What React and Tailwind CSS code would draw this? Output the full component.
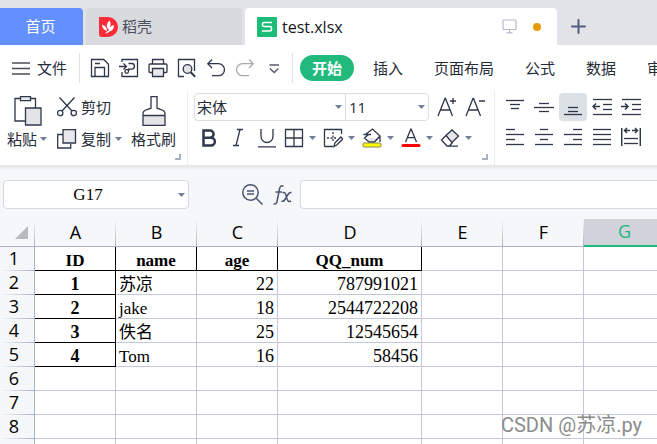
import React from 'react';
import clsx from 'clsx';

const Icon = ({ w = 20, h = 20, children }) => (
    <svg width={w} height={h} viewBox={`0 0 ${w} ${h}`} fill="none" stroke="#2f374b" strokeWidth="1.3" className="shrink-0" aria-hidden="true">
        {children}
    </svg>
);

const Caret = () => (
    <svg width="7" height="4" viewBox="0 0 7 4" className="shrink-0" aria-hidden="true">
        <path d="M0 0h7L3.5 4z" fill="#717d99" />
    </svg>
);

const Corner = () => (
    <svg width="6" height="6" viewBox="0 0 6 6" className="absolute bottom-[5px] right-[6px]" aria-hidden="true">
        <path d="M5 0v5H0" fill="none" stroke="#a7b0c2" strokeWidth="2" />
    </svg>
);

// Quick access bar
const quickActions = [
    {
        name: '保存',
        icon: (
            <Icon>
                <path d="M1.5 1.5h12.2l4.8 4.8v12.2h-17z" />
                <path d="M5 18V9.500h9.500V18M5 5.500h5" />
            </Icon>
        ),
    },
    {
        name: '输出为PDF',
        icon: (
            <Icon>
                <path d="M3 4V1.500h15.500v17H3V14M0 8.500h7M4.500 5.500l3 3-3 3" />
                <path d="M9.500 5.500h3.200a2.700 2.700 0 0 1 0 5.600H9.500v2.400a1.800 1.800 0 1 1-1.800-1.800H11" />
            </Icon>
        ),
    },
    {
        name: '打印',
        icon: (
            <Icon>
                <path d="M4.500 6V1.500h11V6M4.500 14.500h-2.500q-1 0-1-1v-6.500q0-1 1-1h16q1 0 1 1v6.500q0 1-1 1h-2.500" />
                <path d="M4.500 10.500h11v8h-11z" fill="#e9eaed" />
            </Icon>
        ),
    },
    {
        name: '打印预览',
        icon: (
            <Icon>
                <path d="M7 18.500H1.500v-17h16V13" />
                <circle cx="10.500" cy="11" r="4.300" fill="#e0e2e6" />
                <path d="M13.700 14.200l4.500 4.500" strokeWidth="2" />
            </Icon>
        ),
    },
    {
        name: '撤销',
        icon: (
            <Icon>
                <path d="M6 1.500L1.800 5.700 6 10M2 5.700h10.500a6 6 0 0 1 0 12H6" />
            </Icon>
        ),
    },
    {
        name: '恢复',
        icon: (
            <Icon>
                <path d="M14 1.500l4.200 4.200L14 10M18 5.700H7.500a6 6 0 0 0 0 12H14" stroke="#a6a8ae" />
            </Icon>
        ),
    },
    {
        name: '自定义快速访问工具栏',
        icon: (
            <Icon>
                <path d="M5.500 7h9.500M6 10.500l4.200 4 4.200-4" stroke="#555b69" />
            </Icon>
        ),
    },
];

const menus = ['插入', '页面布局', '公式', '数据', '审阅'];

const splitTools = [
    {
        name: '边框',
        icon: (
            <Icon>
                <path d="M1.500 1.500h17v17h-17zM10 1.500v17M1.500 10h17" />
            </Icon>
        ),
    },
    {
        name: '绘图边框',
        icon: (
            <Icon>
                <path d="M1.500 18.500v-17h17V6M1.500 18.500H10" />
                <path d="M4 10h9M10 4v10" strokeDasharray="2 1.500" />
                <path d="M11 18.500l.8-3.500 6-6 2 2-6 6z" fill="#fff" />
            </Icon>
        ),
    },
    {
        name: '填充颜色',
        icon: (
            <Icon>
                <path d="M5 10h13l-5 4H8z" fill="#e3e5e9" stroke="none" />
                <path d="M1.500 6.500H9M4 6l6.500-5 7.500 7-5.500 6H7L2.500 10l4-3.500M18 8v6" />
                <rect x="1" y="15" width="18" height="4" rx="1" fill="#ffff00" stroke="#858b57" strokeWidth="1" />
            </Icon>
        ),
    },
    {
        name: '字体颜色',
        icon: (
            <Icon>
                <path d="M4.500 14L9.800 1.200h.4L15.500 14M6.300 9.700h7.400" />
                <path d="M2 17.500h16" stroke="#ff0000" strokeWidth="3" strokeLinecap="round" />
            </Icon>
        ),
    },
    {
        name: '清除',
        icon: (
            <Icon>
                <path d="M6 7.500l6-5.500 6.500 6-6.500 6.500z" fill="#e5e7ea" />
                <path d="M6 7.500l-4.500 4.500 5.500 6h2.500l3-3.500M8 18.200h10" />
            </Icon>
        ),
    },
];

// Each entry is a list of [x1, x2, y] strokes, plus an optional arrow path
const alignTools = [
    { name: '顶端对齐', lines: [[1, 19, 3], [5, 15, 7], [6, 14, 11]] },
    { name: '垂直居中', lines: [[5, 15, 6], [0, 20, 10], [5, 15, 14]] },
    { name: '底端对齐', lines: [[5, 15, 10], [5, 15, 14], [1, 19, 17]], active: true },
    { name: '减少缩进量', lines: [[1, 20, 2], [11, 20, 7], [11, 20, 12], [1, 20, 17]], arrow: 'M8 9.500H0.500M4 6.500l-3 3 3 3' },
    { name: '增加缩进量', lines: [[1, 20, 2], [11, 20, 7], [11, 20, 12], [1, 20, 17]], arrow: 'M0 9.500h7M4 6.500l3 3-3 3' },
    { name: '左对齐', lines: [[1, 10, 2], [1, 19, 7], [1, 10, 12], [1, 19, 17]] },
    { name: '水平居中', lines: [[6, 14, 2], [1, 19, 7], [6, 14, 12], [1, 19, 17]] },
    { name: '右对齐', lines: [[10, 19, 2], [1, 19, 7], [10, 19, 12], [1, 19, 17]] },
    { name: '两端对齐', lines: [[1, 19, 2], [1, 19, 7], [1, 19, 12], [1, 19, 17]] },
    { name: '分散对齐', lines: [[3, 17, 11], [3, 17, 16]], arrow: 'M.700 1v18M19.300 1v18M9 3.500H3.500M6 1L3.500 3.500 6 6M11 3.500h5.500M14 1l2.500 2.500L14 6' },
];

const columns = ['A', 'B', 'C', 'D', 'E', 'F', 'G'];

const rows = [
    ['ID', 'name', 'age', 'QQ_num'],
    ['1', '苏凉', '22', '787991021'],
    ['2', 'jake', '18', '2544722208'],
    ['3', '佚名', '25', '12545654'],
    ['4', 'Tom', '16', '58456'],
    [],
    [],
    [],
];

const TabBar = () => (
    <div className="flex h-[45px] items-end bg-[#e2e3e7] text-[15px]">
        <button className="h-[37px] w-[83px] shrink-0 rounded-tr bg-[#648fff] pr-[2px] text-white">首页</button>
        <button className="ml-[3px] flex h-[37px] w-[156px] shrink-0 items-center gap-1 rounded-t bg-[#d9dadd] pl-[13px] text-[#4a4f5c]">
            <svg width="19" height="20" viewBox="0 0 19 20" aria-hidden="true">
                <path d="M0 0h9a10 10 0 0 1 0 20H3q-3 0-3-3z" fill="#fb2b37" />
                <path d="M9.500 12.500C6.500 9 8 6 10.500 3.500c1.800 3 1.500 6-1 9zM8 14C4.500 13 3 10.500 3 7.500 6.500 8.500 8 11 8 14zM9.500 14.500c0-3.500 2-5.500 5.500-6.500 0 4-2 6.500-5.500 6.500zM6 16.500l3-3 1.500 1.200q-2 1.800-4.500 1.800z" fill="#fff" />
            </svg>
            稻壳
        </button>
        <div className="ml-[3px] flex h-[37px] w-[312px] shrink-0 items-center rounded-t bg-white pl-3 pr-4 text-[#15171d]">
            <svg width="20" height="20" viewBox="0 0 20 20" className="mr-[5px]" aria-hidden="true">
                <rect width="20" height="20" rx="1" fill="#1abc78" />
                <path d="M15 5.500H7q-1.500 0-1.500 1.500v1q0 1.500 1.500 1.500h6q1.500 0 1.500 1.500v1.500q0 1.500-1.500 1.500H5" fill="none" stroke="#fff" strokeWidth="1.500" />
            </svg>
            <span className="font-['Open_Sans',sans-serif] text-[16px]">test.xlsx</span>
            <svg width="15" height="15" viewBox="0 0 15 15" className="ml-auto" fill="none" stroke="#b4bacb" strokeWidth="1.200" aria-hidden="true">
                <rect x="1" y="1" width="13" height="9.500" rx="1" />
                <path d="M7.500 10.500v3M4.500 13.800h6" />
            </svg>
            <span className="ml-4 h-2 w-2 rounded-full bg-[#e69a05]"></span>
        </div>
        <button aria-label="新建" className="flex h-[37px] w-[43px] items-center justify-center">
            <svg width="15" height="15" viewBox="0 0 15 15" stroke="#4f5c7a" strokeWidth="2" strokeLinecap="round">
                <path d="M7.500 1v13M1 7.500h13" />
            </svg>
        </button>
    </div>
);

const MenuBar = () => (
    <div className="flex h-[46px] items-center overflow-hidden whitespace-nowrap bg-white text-[15px]">
        <button className="flex h-[30px] w-[80px] shrink-0 items-center gap-[7px] border-r border-[#dfe1e6] pl-3">
            <svg width="18" height="13" viewBox="0 0 18 13" stroke="#4a4e57" strokeWidth="1.300" aria-hidden="true">
                <path d="M0 1h18M0 6.500h18M0 12h18" />
            </svg>
            文件
        </button>
        <div className="flex h-[30px] w-[213px] shrink-0 items-center border-r border-[#dfe1e6] pl-[5px]">
            {quickActions.map((action) => (
                <button key={action.name} aria-label={action.name} className="flex w-[29px] shrink-0 justify-center">
                    {action.icon}
                </button>
            ))}
        </div>
        <nav className="flex items-center gap-[31px] pl-[7px]">
            <a href="#start" className="-mr-3 rounded-full bg-[#21ba7c] px-3 py-[2px] font-bold leading-[22px] text-white">开始</a>
            {menus.map((menu) => (
                <a key={menu} href="#menu">{menu}</a>
            ))}
        </nav>
    </div>
);

const Ribbon = () => (
    <div className="flex h-[74px] bg-white text-[15px] leading-5">
        {/* Clipboard */}
        <div className="relative flex w-[188px] shrink-0 border-r border-[#eceef1] pl-[7px]">
            <button className="flex w-[40px] flex-col items-start gap-[3px] pt-[5px]">
                <span className="pl-[7px]">
                    <Icon w={28} h={30}>
                        <path d="M6 2.500H1v22.500h10M17 2.500h4.500V12" />
                        <path d="M6.500.700h10v4h-10z" fill="#e9eaed" />
                        <path d="M11.500 12h15.500v17h-15.500z" fill="#e2e4e8" />
                    </Icon>
                </span>
                <span className="flex items-center gap-[3px] whitespace-nowrap">粘贴<Caret /></span>
            </button>
            <div className="flex flex-col gap-3 pl-[10px] pt-[6px]">
                <button className="flex items-center gap-1 whitespace-nowrap">
                    <Icon>
                        <path d="M2.500.500L15 14M17.500.500L5 14" />
                        <circle cx="3.200" cy="16" r="2.700" />
                        <circle cx="16.800" cy="16" r="2.700" />
                    </Icon>
                    剪切
                </button>
                <button className="flex items-center gap-1 whitespace-nowrap">
                    <Icon>
                        <path d="M6 5.500H.700v13.500h13V15" />
                        <path d="M6 .700h12.500V14H6z" fill="#e6e8eb" />
                    </Icon>
                    复制<Caret />
                </button>
            </div>
            <button className="flex flex-col items-center gap-[3px] whitespace-nowrap pl-[9px] pt-[5px]">
                <Icon w={24} h={30}>
                    <path d="M1 20h22v9.300H1z" fill="#e2e4e8" stroke="none" />
                    <path d="M9 .700h6v11.500l4 1.500q4 1 4 4v11.600H1V17.700q0-3 4-4l4-1.500zM1 19.500h22" />
                </Icon>
                格式刷
            </button>
            <Corner />
        </div>

        {/* Font */}
        <div className="relative w-[307px] shrink-0 border-r border-[#eceef1] pl-[6px] pt-[2px]">
            <div className="flex h-7 items-center">
                <label className="relative flex items-center">
                    <select aria-label="字体" className="h-7 w-[152px] appearance-none rounded-l-sm border border-[#dadde3] bg-white pl-[2px]">
                        <option>宋体</option>
                    </select>
                    <span className="pointer-events-none absolute right-1"><Caret /></span>
                </label>
                <label className="relative flex items-center">
                    <select aria-label="字号" className="-ml-px h-7 w-[84px] appearance-none rounded-r-sm border border-[#dadde3] bg-white pl-[3px] font-['Open_Sans',sans-serif]">
                        <option>11</option>
                    </select>
                    <span className="pointer-events-none absolute right-1"><Caret /></span>
                </label>
                <button aria-label="增大字号" className="ml-2">
                    <Icon>
                        <path d="M1 19L8 1.500h.500L15.500 19M3.500 13h9.500M13 4h6M16 1v6" />
                    </Icon>
                </button>
                <button aria-label="减小字号" className="ml-2">
                    <Icon>
                        <path d="M1 19L8 1.500h.500L15.500 19M3.500 13h9.500M14 4h6" />
                    </Icon>
                </button>
            </div>
            <div className="mt-[7px] flex items-center">
                <button aria-label="加粗" className="flex w-[29px] justify-center">
                    <Icon>
                        <path d="M4.500 2.500h6.500a3.600 3.600 0 0 1 0 7.200H4.500zM4.500 9.700h7.500a3.900 3.900 0 0 1 0 7.800H4.500z" strokeWidth="2.500" />
                    </Icon>
                </button>
                <button aria-label="倾斜" className="flex w-[29px] justify-center">
                    <Icon>
                        <path d="M9 1.500h6M5 17.500h6M12 1.500L8 17.500" />
                    </Icon>
                </button>
                <button aria-label="下划线" className="mr-[3px] flex w-[29px] justify-center">
                    <Icon>
                        <path d="M4 1v7.500a6 6 0 0 0 12 0V1M1 18.800h18" />
                    </Icon>
                </button>
                <div className="flex gap-[7px]">
                    {splitTools.map((tool) => (
                        <button key={tool.name} aria-label={tool.name} className="flex items-center gap-[5px]">
                            {tool.icon}
                            <Caret />
                        </button>
                    ))}
                </div>
            </div>
            <Corner />
        </div>

        {/* Alignment */}
        <div className="grid shrink-0 auto-rows-min grid-cols-5 gap-x-px gap-y-[2px] pl-[6px] pt-[2px]">
            {alignTools.map((tool) => (
                <button
                    key={tool.name}
                    aria-label={tool.name}
                    className={clsx('flex h-7 w-7 items-center justify-center rounded-sm', tool.active && 'bg-[#dce1e6]')}
                >
                    <Icon>
                        {tool.lines.map(([x1, x2, y]) => (
                            <path key={y} d={`M${x1} ${y + 0.5}H${x2}`} />
                        ))}
                        {tool.arrow && <path d={tool.arrow} strokeWidth="1.500" />}
                    </Icon>
                </button>
            ))}
        </div>
    </div>
);

const FormulaBar = () => (
    <div className="flex h-[54px] items-center bg-linear-to-b from-[#e3e4e6] to-[#f5f7f9] to-10% pl-[3px] pt-[5px]">
        <label className="relative flex items-center">
            <input
                aria-label="名称框"
                defaultValue="G17"
                className="h-[29px] w-[186px] rounded-sm border border-[#d6d9dd] bg-white pr-4 text-center font-['Liberation_Serif',serif] text-[17px] text-black"
            />
            <span className="absolute right-1"><Caret /></span>
        </label>
        <button aria-label="查找" className="ml-[53px]">
            <svg width="21" height="21" viewBox="0 0 21 21" fill="none" stroke="#4a556f" strokeWidth="1.500">
                <circle cx="8.500" cy="8.500" r="7.700" />
                <path d="M14 14l6.500 6.500M5 7h7M5 10h7" />
            </svg>
        </button>
        <button aria-label="插入函数" className="ml-[10px]">
            <svg width="19" height="20" viewBox="0 0 19 20" fill="none" stroke="#4a556f" strokeWidth="1.500">
                <path d="M10.500 1.200C8 .200 7 1.500 6.500 4L4 16.500Q3.500 19.500.500 19M2.500 7h6.500" />
                <path d="M9.500 8q2-1.500 3 1l2 6q1 2.500 3.500 1M18.500 7.500Q16.500 7 15 9.500l-3 5q-1.500 2.500-3.500 1.500" />
            </svg>
        </button>
        <input aria-label="编辑栏" className="ml-[8px] h-[29px] min-w-0 flex-1 rounded-l-sm border border-r-0 border-[#d6d9dd] bg-white px-2" />
    </div>
);

const cellClass = (r, c) => {
    const framed = (r === 0 && c < 4) || (c === 0 && r < 5);
    return clsx(
        'h-6 border-b border-r px-[3px] py-0',
        framed ? 'border-black text-center font-bold' : 'border-[#c2c7db]',
        !framed && (c > 1 ? 'text-right' : 'text-left'),
        r > 0 && c !== 1 ? 'text-[18px]' : 'text-[17px]'
    );
};

const Sheet = () => (
    <table className="w-[665px] table-fixed border-separate border-spacing-0 bg-white font-['Liberation_Serif','Noto_Sans_CJK_SC',serif] text-black">
        <colgroup>
            <col className="w-[35px]" />
            {columns.map((col) => (
                <col key={col} className={col === 'D' ? 'w-[144px]' : 'w-[81px]'} />
            ))}
        </colgroup>
        <thead className="bg-[#f5f7f9] font-['Open_Sans',sans-serif] text-[18px] leading-6">
            <tr>
                <th className="h-7 border-b border-[#a9b2ca] bg-[linear-gradient(to_bottom,transparent,#a9b2ca)] bg-[length:1px_100%] bg-right bg-no-repeat p-0 pr-[7px]">
                    <svg width="13" height="13" viewBox="0 0 13 13" className="ml-auto" aria-hidden="true">
                        <path d="M13 0v13H0z" fill="#b9babc" />
                    </svg>
                </th>
                {columns.map((col) => (
                    <th
                        key={col}
                        scope="col"
                        className={clsx(
                            'h-7 p-0 pb-[2px] font-normal',
                            col === 'G'
                                ? 'border-b-2 border-[#21ba7c] bg-[#d0d3da] text-[#21ba7c]'
                                : 'border-b border-[#a9b2ca] bg-[linear-gradient(to_bottom,transparent,#a9b2ca)] bg-[length:1px_100%] bg-right bg-no-repeat'
                        )}
                    >
                        {col}
                    </th>
                ))}
            </tr>
        </thead>
        <tbody>
            {rows.map((row, r) => (
                <tr key={r}>
                    <th scope="row" className="h-6 border-r border-[#a9b2ca] bg-[#f5f7f9] bg-[linear-gradient(to_right,transparent,#a9b2ca)] bg-[length:100%_1px] bg-bottom bg-no-repeat p-0 pb-[2px] pr-[6px] font-['Open_Sans',sans-serif] text-[18px] font-normal leading-[22px]">
                        {r + 1}
                    </th>
                    {columns.map((col, c) => (
                        <td key={col} className={cellClass(r, c)}>
                            <div className="h-[22px] leading-[25px]">{row[c]}</div>
                        </td>
                    ))}
                </tr>
            ))}
            {/* next row, cut off by the window edge */}
            <tr>
                <th className="h-6 border-r border-[#a9b2ca] bg-[#f5f7f9]"></th>
                {columns.map((col) => (
                    <td key={col} className="h-6 border-b border-r border-[#c2c7db]"></td>
                ))}
            </tr>
        </tbody>
    </table>
);

const App = () => {
    return (
        <div className="relative flex h-screen flex-col overflow-hidden bg-white font-['Noto_Sans_CJK_SC',sans-serif] text-[#262b38]">
            <header className="shrink-0">
                <TabBar />
                <MenuBar />
                <Ribbon />
                <FormulaBar />
            </header>
            <main className="min-h-0 flex-1 overflow-hidden">
                <Sheet />
            </main>
            <p className="absolute bottom-[5px] right-[15px] font-[Roboto,'Noto_Sans_CJK_SC',sans-serif] text-[20px] leading-7 text-[#8c8c8c]">
                CSDN @苏凉.py
            </p>
        </div>
    );
};

export default App;
